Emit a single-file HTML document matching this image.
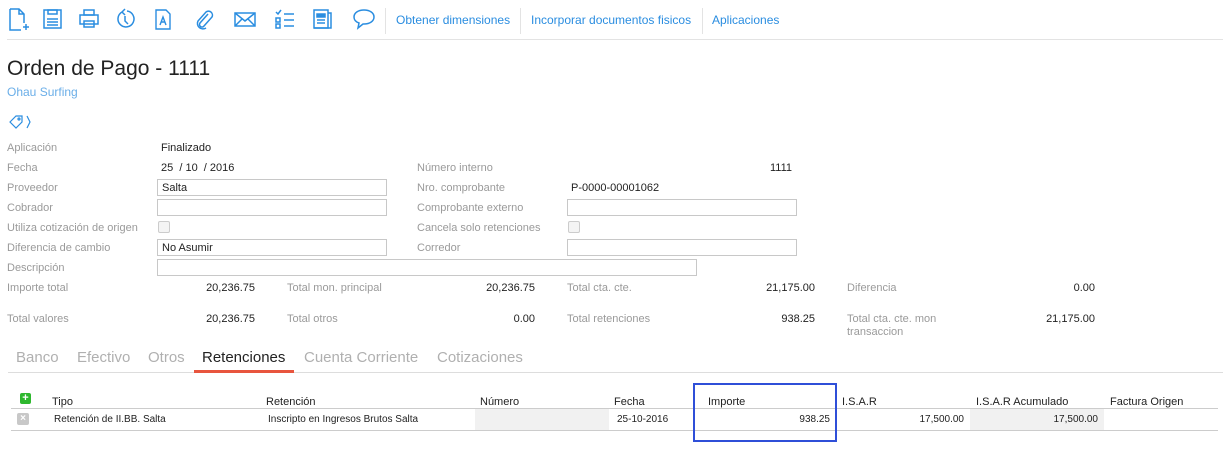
<!DOCTYPE html>
<html><head><meta charset="utf-8"><style>
body{margin:0;width:1223px;height:451px;background:#fff;font-family:"Liberation Sans",sans-serif;position:relative;overflow:hidden;color:#222}
.a{position:absolute;white-space:nowrap}
.l{font-size:11px;color:#9a9a9a}
.v{font-size:11px;color:#222}
.r{text-align:right}
.in{position:absolute;height:17px;border:1px solid #c8c8c8;background:#fff;box-sizing:border-box;font-size:11px;padding:1px 4px;line-height:14px}
.cb{position:absolute;width:10px;height:10px;border:1px solid #ccc;border-radius:2px;background:#f4f4f4}
.ic{position:absolute;top:8px}
.lk{font-size:12px;color:#2a8de0;top:13px}
.sep{position:absolute;width:1px;background:#e3e3e3;top:8px;height:26px}
.tab{font-size:15px;color:#b0b0b0;top:349px}
.th{font-size:11px;color:#222;top:396px}
.td{font-size:10px;color:#222;top:414px}
.f{position:absolute;left:0;top:1px;width:1223px;height:451px}
</style></head><body>
<!-- toolbar -->
<svg class="ic" style="left:8px" width="22" height="24" viewBox="0 0 22 24" fill="none" stroke="#2a8de0" stroke-width="1.5"><path d="M2 1h9l5 5v9M2 1v21h11M11 1v5h5M15 19h6M18 16v6"/></svg>
<svg class="ic" style="left:43px" width="20" height="22" viewBox="0 0 20 22" fill="none" stroke="#2a8de0" stroke-width="1.5"><rect x="1" y="2" width="17" height="18"/><rect x="5" y="2" width="9" height="4"/><path d="M4 11h11M4 14h11M4 17h11"/></svg>
<svg class="ic" style="left:79px" width="20" height="22" viewBox="0 0 20 22" fill="none" stroke="#2a8de0" stroke-width="1.5"><rect x="5" y="2" width="10" height="5"/><rect x="1" y="7" width="18" height="9"/><rect x="5" y="13" width="10" height="6"/></svg>
<svg class="ic" style="left:115px" width="20" height="22" viewBox="0 0 20 22" fill="none" stroke="#2a8de0" stroke-width="1.5"><path d="M7 4A8 8 0 1 0 12 3M7 4l3-3M7 4l3 3M10 8v5l3 3"/></svg>
<svg class="ic" style="left:155px" width="16" height="22" viewBox="0 0 16 22" fill="none" stroke="#2a8de0" stroke-width="1.4"><path d="M1 2h10l4 4v15H1z"/><path d="M5 17l3-8 3 8M6 14h4"/></svg>
<svg class="ic" style="left:194px" width="20" height="22" viewBox="0 0 20 22" fill="none" stroke="#2a8de0" stroke-width="1.5"><path d="M14 6L6 15a2.5 2.5 0 0 0 4 3l8-9a4 4 0 0 0-6-5L4 13a5.5 5.5 0 0 0 8 7"/></svg>
<svg class="ic" style="left:234px" width="22" height="22" viewBox="0 0 22 22" fill="none" stroke="#2a8de0" stroke-width="1.5"><rect x="1" y="5" width="20" height="13"/><path d="M1 5l10 8 10-8M1 18l7-7M21 18l-7-7"/></svg>
<svg class="ic" style="left:275px" width="20" height="22" viewBox="0 0 20 22" fill="none" stroke="#2a8de0" stroke-width="1.5"><path d="M1 4l2 2 3-4M9 6h10M9 12h10M9 18h10"/><rect x="1" y="10" width="4" height="4"/><rect x="1" y="16" width="4" height="4"/></svg>
<svg class="ic" style="left:313px" width="20" height="22" viewBox="0 0 20 22" fill="none" stroke="#2a8de0" stroke-width="1.5"><rect x="1" y="2" width="14" height="18"/><path d="M15 5h3v15H1" /><rect x="4" y="6" width="8" height="3" fill="#2a8de0"/><path d="M4 12h8M4 15h8"/></svg>
<svg class="ic" style="left:353px" width="22" height="22" viewBox="0 0 22 22" fill="none" stroke="#2a8de0" stroke-width="1.5"><path d="M11 2C5 2 1 5 1 9c0 3 2 5 5 6l-1 5 5-4h1c6 0 10-3 10-7s-4-7-10-7z"/></svg>
<div class="sep" style="left:385px"></div>
<div class="a lk" style="left:396px">Obtener dimensiones</div>
<div class="sep" style="left:520px"></div>
<div class="a lk" style="left:531px">Incorporar documentos fisicos</div>
<div class="sep" style="left:702px"></div>
<div class="a lk" style="left:712px">Aplicaciones</div>
<div class="a" style="left:7px;top:39px;width:1216px;height:1px;background:#e3e3e3"></div>
<div class="a" style="left:7px;top:57px;font-size:21px;color:#222">Orden de Pago - 1111</div>
<div class="a" style="left:7px;top:85px;font-size:12px;color:#6aaee8">Ohau Surfing</div>
<svg class="a" style="left:8px;top:114px" width="26" height="16" viewBox="0 0 26 16" fill="none" stroke="#2a8de0" stroke-width="1.2"><path d="M2 8l6-6h6v6l-6 6z"/><circle cx="11" cy="5" r="1"/><path d="M19 2l3 6-3 6"/></svg>
<div class="f">
<div class="a l" style="left:7px;top:141px">Aplicación</div><div class="a v" style="left:161px;top:141px">Finalizado</div>
<div class="a l" style="left:7px;top:161px">Fecha</div><div class="a v" style="left:161px;top:161px">25 &nbsp;/ 10 &nbsp;/ 2016</div>
<div class="a l" style="left:417px;top:161px">Número interno</div><div class="a v" style="left:770px;top:161px">1111</div>
<div class="a l" style="left:7px;top:181px">Proveedor</div><div class="in" style="left:157px;top:178px;width:230px">Salta</div>
<div class="a l" style="left:417px;top:181px">Nro. comprobante</div><div class="a v" style="left:571px;top:181px">P-0000-00001062</div>
<div class="a l" style="left:7px;top:201px">Cobrador</div><div class="in" style="left:157px;top:198px;width:230px"></div>
<div class="a l" style="left:417px;top:201px">Comprobante externo</div><div class="in" style="left:567px;top:198px;width:230px"></div>
<div class="a l" style="left:7px;top:221px">Utiliza cotización de origen</div><div class="cb" style="left:158px;top:220px"></div>
<div class="a l" style="left:417px;top:221px">Cancela solo retenciones</div><div class="cb" style="left:568px;top:220px"></div>
<div class="a l" style="left:7px;top:241px">Diferencia de cambio</div><div class="in" style="left:157px;top:238px;width:230px">No Asumir</div>
<div class="a l" style="left:417px;top:241px">Corredor</div><div class="in" style="left:567px;top:238px;width:230px"></div>
<div class="a l" style="left:7px;top:261px">Descripción</div><div class="in" style="left:157px;top:258px;width:540px"></div>
<div class="a l" style="left:7px;top:281px">Importe total</div><div class="a v r" style="left:155px;width:100px;top:281px">20,236.75</div>
<div class="a l" style="left:287px;top:281px">Total mon. principal</div><div class="a v r" style="left:435px;width:100px;top:281px">20,236.75</div>
<div class="a l" style="left:567px;top:281px">Total cta. cte.</div><div class="a v r" style="left:715px;width:100px;top:281px">21,175.00</div>
<div class="a l" style="left:847px;top:281px">Diferencia</div><div class="a v r" style="left:995px;width:100px;top:281px">0.00</div>
<div class="a l" style="left:7px;top:312px">Total valores</div><div class="a v r" style="left:155px;width:100px;top:312px">20,236.75</div>
<div class="a l" style="left:287px;top:312px">Total otros</div><div class="a v r" style="left:435px;width:100px;top:312px">0.00</div>
<div class="a l" style="left:567px;top:312px">Total retenciones</div><div class="a v r" style="left:715px;width:100px;top:312px">938.25</div>
<div class="a l" style="left:847px;top:312px;line-height:13px">Total cta. cte. mon<br>transaccion</div><div class="a v r" style="left:995px;width:100px;top:312px">21,175.00</div>
</div>
<!-- tabs -->
<div class="a tab" style="left:16px">Banco</div>
<div class="a tab" style="left:77px">Efectivo</div>
<div class="a tab" style="left:148px">Otros</div>
<div class="a tab" style="left:202px;color:#222">Retenciones</div>
<div class="a tab" style="left:304px">Cuenta Corriente</div>
<div class="a tab" style="left:437px">Cotizaciones</div>
<div class="a" style="left:8px;top:372px;width:1215px;height:1px;background:#ddd"></div>
<div class="a" style="left:194px;top:370px;width:100px;height:3px;background:#e8553e"></div>
<!-- table -->
<div class="a" style="left:20px;top:393px;width:11px;height:11px;background:#2eb82e;border-radius:2px;color:#fff;font-size:11px;line-height:10px;text-align:center;font-weight:bold">+</div>
<div class="a th" style="left:52px">Tipo</div>
<div class="a th" style="left:266px">Retención</div>
<div class="a th" style="left:480px">Número</div>
<div class="a th" style="left:614px">Fecha</div>
<div class="a th" style="left:708px">Importe</div>
<div class="a th" style="left:842px">I.S.A.R</div>
<div class="a th" style="left:976px">I.S.A.R Acumulado</div>
<div class="a th" style="left:1110px">Factura Origen</div>
<div class="a" style="left:11px;top:408px;width:1207px;height:1px;background:#ccc"></div>
<div class="a" style="left:475px;top:409px;width:134px;height:21px;background:#f1f1f1"></div>
<div class="a" style="left:970px;top:409px;width:134px;height:21px;background:#f1f1f1"></div>
<div class="a" style="left:17px;top:413px;width:12px;height:12px;background:#c8c8c8;border-radius:2px;color:#fff;font-size:10px;line-height:12px;text-align:center;font-weight:bold">×</div>
<div class="a td" style="left:54px">Retención de II.BB. Salta</div>
<div class="a td" style="left:268px">Inscripto en Ingresos Brutos Salta</div>
<div class="a td" style="left:617px">25-10-2016</div>
<div class="a td r" style="left:730px;width:100px">938.25</div>
<div class="a td r" style="left:864px;width:100px">17,500.00</div>
<div class="a td r" style="left:998px;width:100px">17,500.00</div>
<div class="a" style="left:11px;top:430px;width:1207px;height:1px;background:#ccc"></div>
<div class="a" style="left:693px;top:383px;width:140px;height:55px;border:2px solid #2f4fd8"></div>
</body></html>
